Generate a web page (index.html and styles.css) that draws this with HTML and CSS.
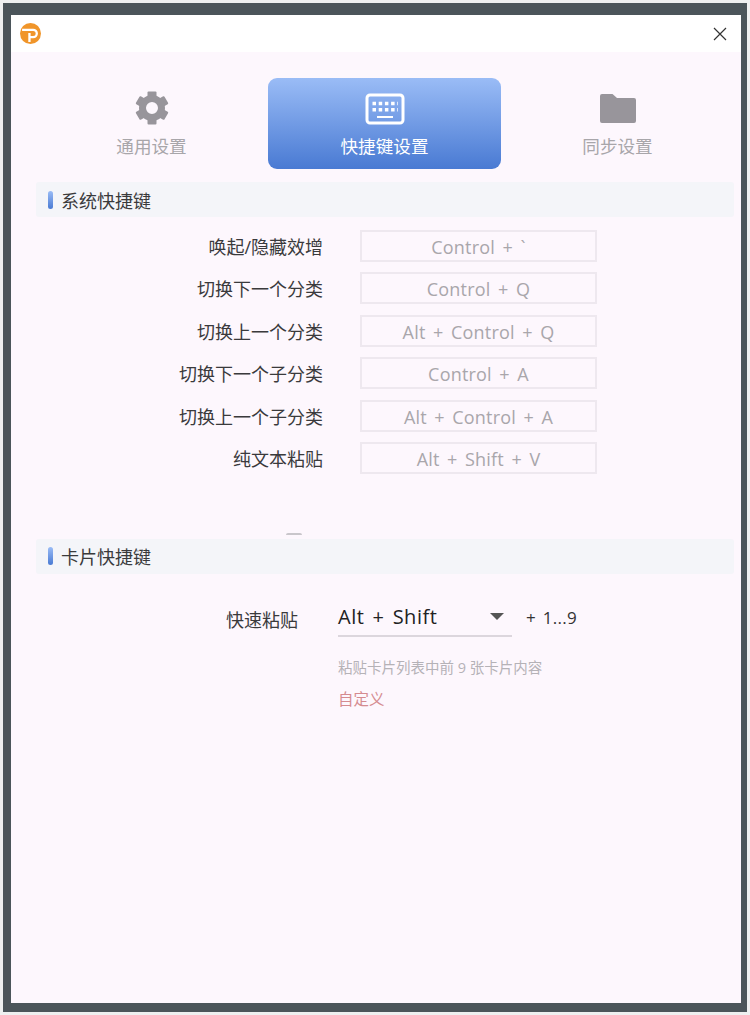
FILE: index.html
```html
<!DOCTYPE html>
<html>
<head>
    <title>设置</title>
    <meta charset="utf-8">
    <link rel="stylesheet" href="styles.css">
</head>
<body>
    <div class="frame">
        <div class="window">
            <div class="title-bar">
                <svg class="logo" width="21" height="21" viewBox="0 0 20 20">
                    <circle cx="10" cy="10" r="10" fill="#f0952a"/>
                    <path d="M2 6.500H12.500A3.500 3.500 0 0 1 12.500 13.500H9M9 9.500V18" fill="none" stroke="#fff" stroke-width="2.200"/>
                </svg>
                <svg class="close" width="14" height="14" viewBox="0 0 14 14">
                    <path d="M1 1L13 13M13 1L1 13" stroke="#333" stroke-width="1.2" fill="none"/>
                </svg>
            </div>
            <div class="content">
                <div class="tabs">
                    <div class="tab">
                        <svg width="34" height="34" viewBox="0 0 34 34">
                            <g fill="#98959b">
                                <rect x="12.500" y="0.500" width="9" height="8" rx="1"/>
                                <rect x="12.500" y="0.500" width="9" height="8" rx="1" transform="rotate(60 17 17)"/>
                                <rect x="12.500" y="0.500" width="9" height="8" rx="1" transform="rotate(120 17 17)"/>
                                <rect x="12.500" y="0.500" width="9" height="8" rx="1" transform="rotate(180 17 17)"/>
                                <rect x="12.500" y="0.500" width="9" height="8" rx="1" transform="rotate(240 17 17)"/>
                                <rect x="12.500" y="0.500" width="9" height="8" rx="1" transform="rotate(300 17 17)"/>
                            </g>
                            <circle cx="17" cy="17" r="9.500" fill="none" stroke="#98959b" stroke-width="7"/>
                        </svg>
                        <span>通用设置</span>
                    </div>
                    <div class="tab active">
                        <svg width="40" height="32" viewBox="0 0 40 32">
                            <rect x="2" y="2" width="36" height="28" rx="3" fill="none" stroke="#fff" stroke-width="3"/>
                            <path stroke="#fff" stroke-width="3.500" stroke-dasharray="3.500 2.700" fill="none" d="M7.500 10.500H33M7.500 16.800H33"/>
                            <path stroke="#fff" stroke-width="2" fill="none" d="M12 24H28"/>
                        </svg>
                        <span>快捷键设置</span>
                    </div>
                    <div class="tab">
                        <svg width="36" height="31" viewBox="0 0 36 31">
                            <path fill="#98959b" d="M0 2a2 2 0 0 1 2-2h10.500l4.500 4h17a2 2 0 0 1 2 2v21a2 2 0 0 1-2 2H2a2 2 0 0 1-2-2z"/>
                        </svg>
                        <span>同步设置</span>
                    </div>
                </div>

                <div class="section-head"><i></i>系统快捷键</div>
                <div class="rows">
                    <div class="row"><label>唤起/隐藏效增</label><div class="key-box">Control + `</div></div>
                    <div class="row"><label>切换下一个分类</label><div class="key-box">Control + Q</div></div>
                    <div class="row"><label>切换上一个分类</label><div class="key-box">Alt + Control + Q</div></div>
                    <div class="row"><label>切换下一个子分类</label><div class="key-box">Control + A</div></div>
                    <div class="row"><label>切换上一个子分类</label><div class="key-box">Alt + Control + A</div></div>
                    <div class="row"><label>纯文本粘贴</label><div class="key-box">Alt + Shift + V</div></div>
                </div>

                <div class="clipped-mark"></div>

                <div class="section-head"><i></i>卡片快捷键</div>
                <div class="paste-row">
                    <label>快速粘贴</label>
                    <div class="select">
                        <span>Alt + Shift</span>
                        <b class="arrow"></b>
                    </div>
                    <span class="suffix">+ 1...9</span>
                </div>
                <p class="hint">粘贴卡片列表中前 9 张卡片内容</p>
                <a class="custom">自定义</a>
            </div>
        </div>
    </div>
</body>
</html>
```
FILE: styles.css
```css
* {
    margin: 0;
    padding: 0;
    box-sizing: border-box;
}

body {
    background: #eef0f0;
    height: 1015px;
    overflow: hidden;
    padding: 3px;
    font-family: "Open Sans", "Noto Sans CJK SC", sans-serif;
}

.frame {
    height: 1009px;
    background: #4b555a;
    padding: 12px 3px 9px 8px;
}

.window {
    width: 730px;
    height: 988px;
    background: #fdf7fd;
    display: flex;
    flex-direction: column;
}

.title-bar {
    height: 37px;
    background: #fff;
    display: flex;
    align-items: center;
    justify-content: space-between;
    padding: 0 14px 0 9px;
    flex-shrink: 0;
}

.content {
    padding: 26px 7px 0 24px;
}

.tabs {
    display: flex;
    height: 91px;
}

.tab {
    width: 233px;
    height: 91px;
    display: flex;
    flex-direction: column;
    align-items: center;
    justify-content: flex-end;
    padding-bottom: 10px;
    color: #a8a6aa;
    font-size: 17.600px;
    line-height: 26px;
}

.tab svg {
    margin-bottom: 8px;
}

.tab.active {
    background: linear-gradient(#9abcf6, #497ad3);
    border-radius: 9px;
    color: #fff;
}

.section-head {
    height: 35px;
    margin-top: 13px;
    margin-left: 1px;
    padding-left: 12px;
    background: #f4f5f9;
    border-radius: 3px;
    display: flex;
    align-items: center;
    font-size: 18px;
    color: #3a3a3c;
}

.section-head i {
    width: 5px;
    height: 18px;
    border-radius: 3px;
    background: linear-gradient(#9abcf6, #497ad3);
    margin-right: 8px;
}

.rows {
    margin-top: 13px;
}

.row {
    display: flex;
    align-items: center;
    height: 32px;
    margin-bottom: 10.4px;
}

.row label {
    width: 288px;
    text-align: right;
    font-size: 18px;
    color: #3a3a3c;
}

.key-box {
    width: 237px;
    height: 32px;
    margin-left: 37px;
    border: 2px solid #eee8ef;
    text-align: center;
    line-height: 30px;
    font-size: 18px;
    letter-spacing: 0.2px;
    word-spacing: 2.600px;
    color: #a9a6ab;
}

.clipped-mark {
    width: 16px;
    height: 2px;
    margin: 59px 0 0 251px;
    border-radius: 8px 8px 0 0;
    background: #c9c6cb;
}

.clipped-mark + .section-head {
    margin-top: 4px;
}

.paste-row {
    display: flex;
    align-items: flex-start;
    margin-top: 26px;
}

.paste-row label {
    width: 263px;
    text-align: right;
    font-size: 18px;
    line-height: 40px;
    color: #3a3a3c;
}

.select {
    width: 174px;
    height: 37px;
    margin-left: 40px;
    padding: 0 8px 2px 0;
    border-bottom: 2px solid #dcd6dd;
    display: flex;
    align-items: center;
    justify-content: space-between;
    font-size: 20px;
    letter-spacing: 0.5px;
    word-spacing: 2.500px;
    color: #222;
}

.arrow {
    width: 0;
    height: 0;
    border-left: 7px solid transparent;
    border-right: 7px solid transparent;
    border-top: 7px solid #555;
}

.suffix {
    margin-left: 14px;
    font-size: 17px;
    letter-spacing: 0.3px;
    word-spacing: 2px;
    line-height: 36px;
    color: #333;
}

.hint {
    margin: 17px 0 0 303px;
    font-size: 14.500px;
    line-height: 22px;
    color: #b5b2b7;
}

.custom {
    display: block;
    margin: 9px 0 0 303px;
    font-size: 15.500px;
    line-height: 22px;
    color: #d58b90;
}
```
